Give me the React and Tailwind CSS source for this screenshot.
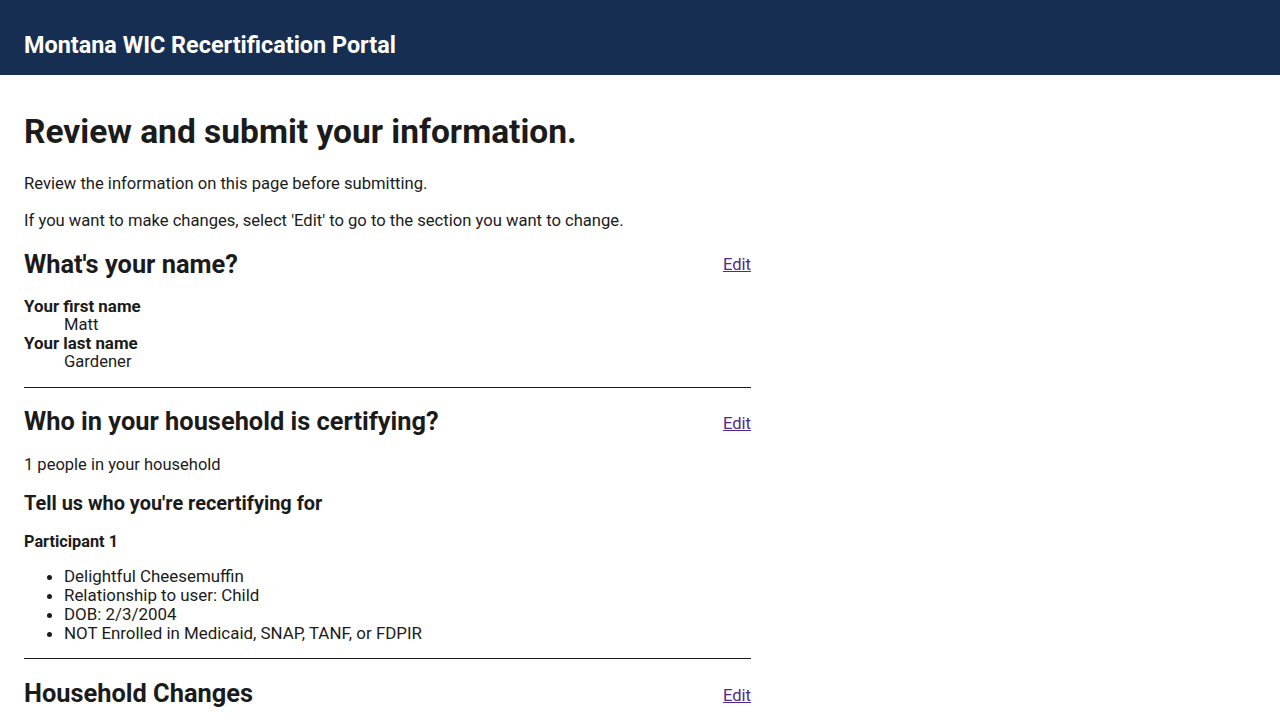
export default function App() {
  const font = { fontFamily: 'Roboto, "Liberation Sans", sans-serif' };
  return (
    <div className="min-h-screen bg-white text-[#1b1b1b]" style={font}>
      <header className="h-[75px] bg-[#162e51] flex items-center px-6 pt-[17px]">
        <h1 className="text-[23.4px] font-bold text-white leading-none">Montana WIC Recertification Portal</h1>
      </header>
      <main className="px-6 pt-[38px]">
        <div className="w-[727px]">
          <h1 className="text-[33.5px] font-bold leading-[38px]">Review and submit your information.</h1>
          <p className="mt-[21px] text-[16.6px] leading-[24px]">Review the information on this page before submitting.</p>
          <p className="mt-[13px] text-[16.6px] leading-[24px]">If you want to make changes, select 'Edit' to go to the section you want to change.</p>

          <div className="mt-[15px] flex items-center justify-between h-[32px]">
            <h2 className="text-[25.4px] font-bold leading-[32px]">What's your name?</h2>
            <a href="#" className="text-[16.6px] text-[#54278f] underline mt-[3px]">Edit</a>
          </div>
          <dl className="mt-[17px] text-[16.6px] leading-[18.5px]">
            <dt className="font-bold text-[16.9px]">Your first name</dt>
            <dd className="ml-10">Matt</dd>
            <dt className="font-bold text-[16.9px]">Your last name</dt>
            <dd className="ml-10">Gardener</dd>
          </dl>
          <hr className="mt-[16px] border-t border-[#1b1b1b]" />

          <div className="mt-[17px] flex items-center justify-between h-[32px]">
            <h2 className="text-[25.4px] font-bold leading-[32px]">Who in your household is certifying?</h2>
            <a href="#" className="text-[16.6px] text-[#54278f] underline mt-[7px]">Edit</a>
          </div>
          <p className="mt-[16px] text-[16.5px] leading-[24px]">1 people in your household</p>
          <h3 className="mt-[14px] text-[19.9px] font-bold leading-[26px]">Tell us who you're recertifying for</h3>
          <h4 className="mt-[14px] text-[16.3px] font-bold leading-[22px]">Participant 1</h4>
          <ul className="mt-[14px] list-disc pl-10 text-[16.9px] leading-[19px]">
            <li>Delightful Cheesemuffin</li>
            <li>Relationship to user: Child</li>
            <li>DOB: 2/3/2004</li>
            <li>NOT Enrolled in Medicaid, SNAP, TANF, or FDPIR</li>
          </ul>
          <hr className="mt-[15px] border-t border-[#1b1b1b]" />

          <div className="mt-[18px] flex items-center justify-between h-[32px]">
            <h2 className="text-[25.4px] font-bold leading-[32px]">Household Changes</h2>
            <a href="#" className="text-[16.6px] text-[#54278f] underline mt-[7px]">Edit</a>
          </div>
        </div>
      </main>
    </div>
  );
}
